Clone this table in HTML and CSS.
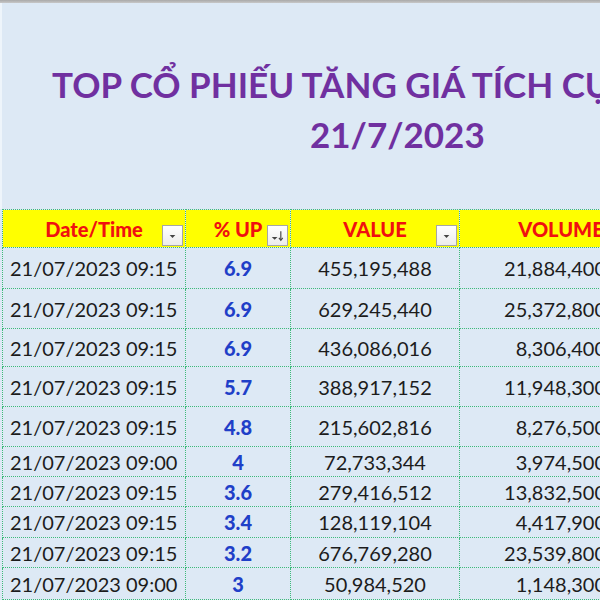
FILE: index.html
```html
<!DOCTYPE html>
<html lang="vi">
<head>
<meta charset="utf-8">
<title>TOP CỔ PHIẾU TĂNG GIÁ TÍCH CỰC</title>
<link rel="stylesheet" href="styles.css">
</head>
<body>
<div class="sheet">
  <div class="topbar"></div>
  <div class="title">
    <div class="line1">TOP CỔ PHIẾU TĂNG GIÁ TÍCH CỰC</div>
    <div class="line2">21/7/2023</div>
  </div>
  <table class="grid">
    <colgroup>
      <col class="c1"><col class="c2"><col class="c3"><col class="c4">
    </colgroup>
    <thead>
      <tr class="head">
        <th><span>Date/Time</span><i class="fbtn"><svg viewBox="0 0 20 20" width="20" height="20"><path d="M7 9h6l-3 3z" fill="#444"/></svg></i></th>
        <th><span>% UP</span><i class="fbtn"><svg viewBox="0 0 20 20" width="20" height="20"><path d="M4 11h6l-3 3z" fill="#444"/><path d="M13.5 5v9" stroke="#444" stroke-width="1.2"/><path d="M11.5 12l2 2.5 2-2.5" stroke="#444" stroke-width="1.2" fill="none"/></svg></i></th>
        <th><span>VALUE</span><i class="fbtn"><svg viewBox="0 0 20 20" width="20" height="20"><path d="M7 9h6l-3 3z" fill="#444"/></svg></i></th>
        <th class="vol-h"><span>VOLUME</span></th>
      </tr>
    </thead>
    <tbody>
      <tr class="r41"><td>21/07/2023 09:15</td><td class="up">6.9</td><td class="val">455,195,488</td><td class="vol">21,884,400</td></tr>
      <tr class="r40"><td>21/07/2023 09:15</td><td class="up">6.9</td><td class="val">629,245,440</td><td class="vol">25,372,800</td></tr>
      <tr class="r38"><td>21/07/2023 09:15</td><td class="up">6.9</td><td class="val">436,086,016</td><td class="vol">8,306,400</td></tr>
      <tr class="r40"><td>21/07/2023 09:15</td><td class="up">5.7</td><td class="val">388,917,152</td><td class="vol">11,948,300</td></tr>
      <tr class="r40"><td>21/07/2023 09:15</td><td class="up">4.8</td><td class="val">215,602,816</td><td class="vol">8,276,500</td></tr>
      <tr class="r30"><td>21/07/2023 09:00</td><td class="up">4</td><td class="val">72,733,344</td><td class="vol">3,974,500</td></tr>
      <tr class="r30"><td>21/07/2023 09:15</td><td class="up">3.6</td><td class="val">279,416,512</td><td class="vol">13,832,500</td></tr>
      <tr class="r31"><td>21/07/2023 09:15</td><td class="up">3.4</td><td class="val">128,119,104</td><td class="vol">4,417,900</td></tr>
      <tr class="r30"><td>21/07/2023 09:15</td><td class="up">3.2</td><td class="val">676,769,280</td><td class="vol">23,539,800</td></tr>
      <tr class="r32"><td>21/07/2023 09:00</td><td class="up">3</td><td class="val">50,984,520</td><td class="vol">1,148,300</td></tr>
    </tbody>
  </table>
</div>
</body>
</html>
```

FILE: styles.css
```css
html, body {
  margin: 0;
  padding: 0;
  background: #dde9f5;
  overflow: hidden;
}
.sheet {
  width: 700px;
  font-family: Lato, "Liberation Sans", sans-serif;
}
.topbar {
  height: 3px;
  background: linear-gradient(#a9a9a9, #c8c8c8);
}
.title {
  height: 206px;
  box-sizing: border-box;
  padding-top: 56px;
  color: #7030a0;
  font-weight: 700;
  font-size: 35px;
  line-height: 50px;
  border-left: 2px solid #eef5fb;
}
.line1 {
  white-space: nowrap;
  padding-left: 50px;
}
.line2 {
  padding-left: 308px;
}
.grid {
  border-collapse: collapse;
  table-layout: fixed;
  width: 660px;
  margin-left: 2px;
}
.c1 { width: 183px; }
.c2 { width: 105px; }
.c3 { width: 169px; }
.c4 { width: 203px; }
.grid th, .grid td {
  border: 1px dotted #3dba7a;
  padding: 0;
  white-space: nowrap;
  overflow: hidden;
}
.head {
  height: 38px;
  background: #ffff00;
}
.head th {
  position: relative;
  color: #f01010;
  font-weight: 900;
  font-size: 20px;
  text-align: center;
  vertical-align: middle;
}
.fbtn {
  position: absolute;
  right: 2px;
  bottom: 1px;
  width: 21px;
  height: 21px;
  box-sizing: border-box;
  border: 1px solid #a6a6a6;
  background: linear-gradient(#ffffff, #ececec);
  display: flex;
  align-items: center;
  justify-content: center;
}
.fbtn svg {
  display: block;
}
.grid td {
  font-size: 20px;
  color: #1c1c1c;
  vertical-align: middle;
}
.grid td:first-child {
  padding-left: 7px;
}
.grid td.up {
  text-align: center;
  color: #1f3fc8;
  font-weight: 900;
}
.grid td.val {
  text-align: center;
}
.grid td.vol {
  text-align: right;
  padding-right: 56px;
}
.r41 { height: 41px; }
.r40 { height: 40px; }
.r38 { height: 38px; }
.r31 { height: 31px; }
.r30 { height: 30px; }
.r32 { height: 32px; }
```
